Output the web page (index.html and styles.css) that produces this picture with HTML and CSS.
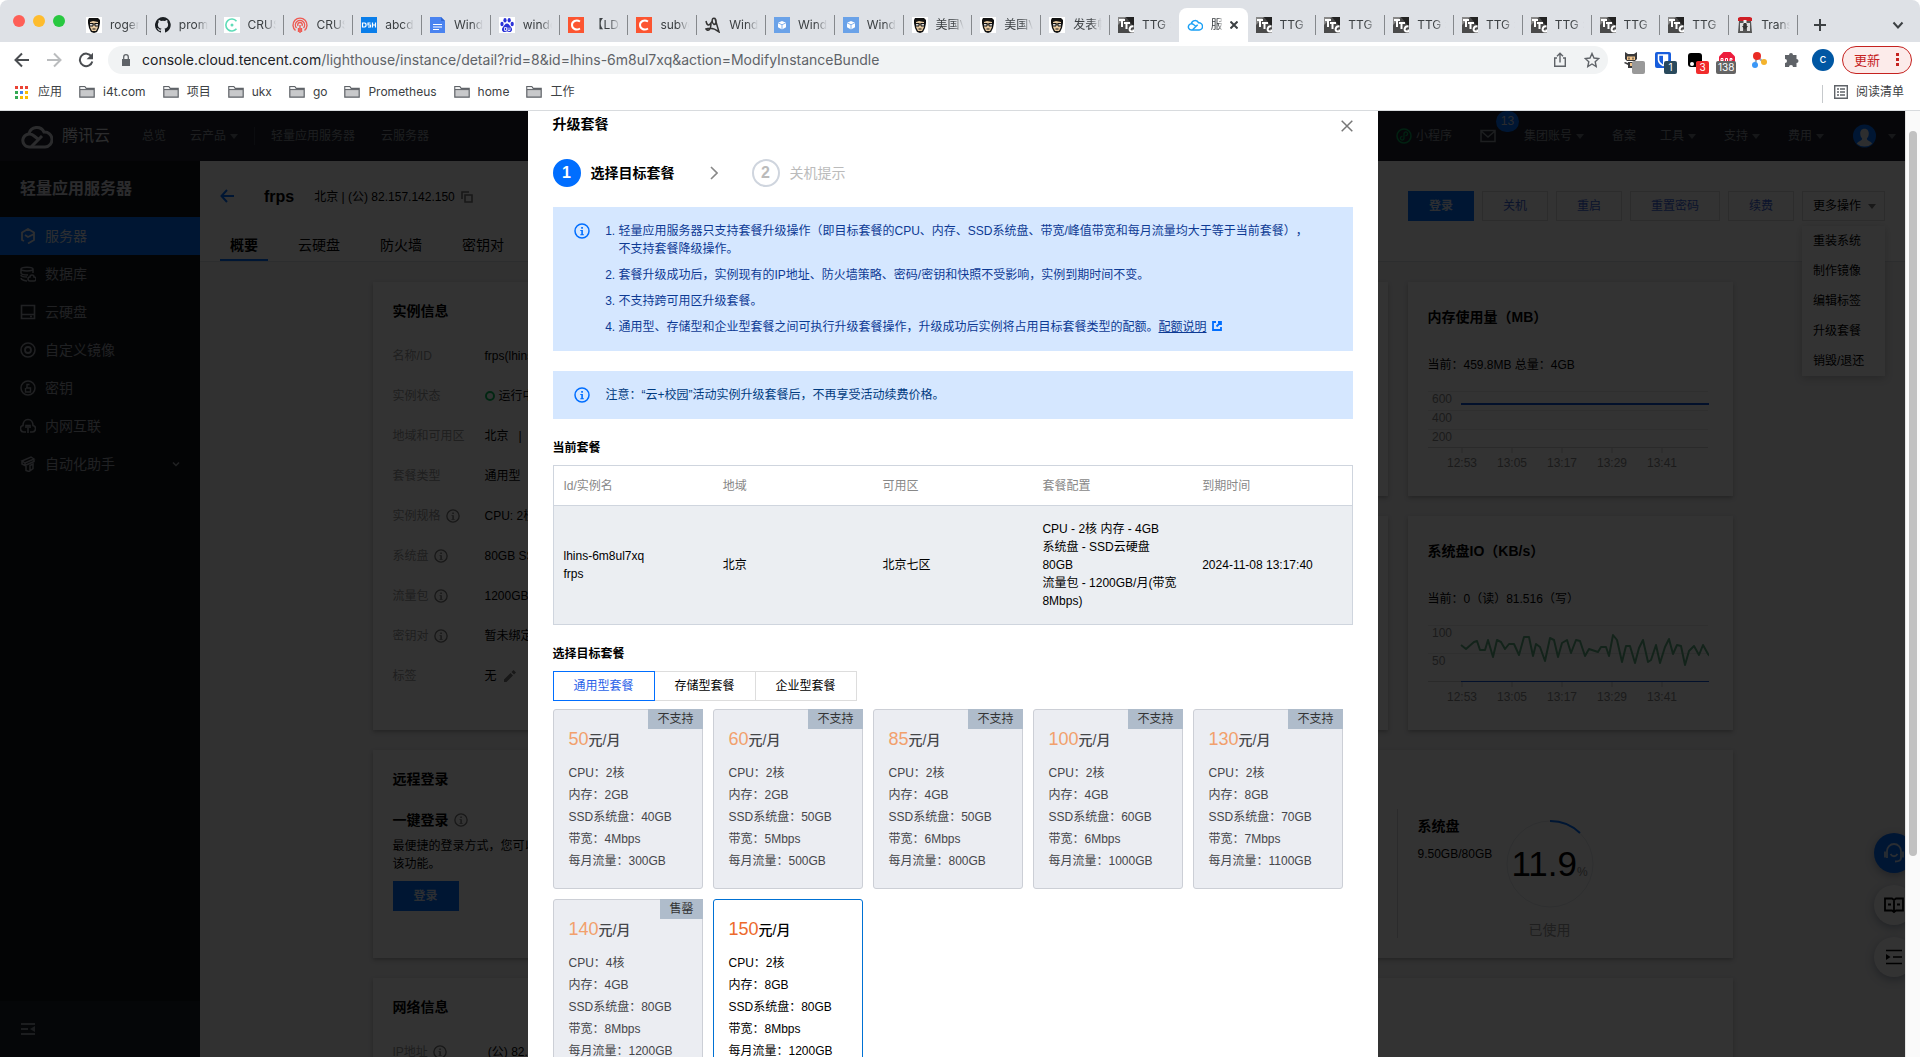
FILE: index.html
```html
<!DOCTYPE html>
<html lang="zh-CN">
<head>
<meta charset="utf-8">
<title>升级套餐 - 轻量应用服务器 - 控制台</title>
<link rel="stylesheet" href="styles.css">
</head>
<body>
<svg class="sprite" aria-hidden="true">
  <symbol id="info" viewBox="0 0 16 16"><circle cx="8" cy="8" r="7" fill="none" stroke="currentColor" stroke-width="1.5"/><path d="M7.2 4h1.7v1.7H7.2zM6.3 7h2.6v4.3h1v1H6.3v-1h1V8h-1z" fill="currentColor"/></symbol>
  <symbol id="folder" viewBox="0 0 16 16"><path d="M.8 13.2V2.6h5l1.4 1.8h8v8.8z" fill="#c8c9cb" stroke="#5f6368" stroke-width="1.2"/><path d="M1.4 3.2h4.1l1.2 1.6H1.4z" fill="#fff"/><path d="M1 5.6h14" stroke="#5f6368"/></symbol>
  <symbol id="face" viewBox="0 0 16 16"><path fill="#fff" d="M0 0h16v16H0z"/><path fill="#111" d="M3 1h9l2 2v3l-1 5-2 4-3 1-3-1-2-4-1-5V3z"/><path fill="#e6c9a0" d="M4 5l3-1 5 1v5l-2 4H6l-2-4z"/><path fill="#d8d8d8" d="M4 6.500h3v2.500H4zM9 6.500h3v2.500H9z"/><path fill="none" stroke="#111" d="M3.500 6.500h3.500v2.500H3.500zM9 6.500h3.500v2.500H9zM7 7h2M6.500 12h3"/></symbol>
  <symbol id="ttg" viewBox="0 0 16 16"><path fill="#4a4a4a" d="M0 0h16v16H0z"/><path fill="#888" d="M0 0h8L0 8z"/><path fill="#222" d="M16 0v10L8 0z"/><path fill="none" stroke="#fff" stroke-width="2" d="M1 3h6M4 3v7M6 6h6M8.500 6v6M15.500 9.500c-4-1-5.500 5-1.500 5h1.500v-2"/></symbol>
  <symbol id="github" viewBox="0 0 16 16"><path fill="#1b1f23" d="M8 0a8 8 0 0 0-2.500 15.600c.4.100.500-.2.500-.4v-1.500c-2.200.5-2.700-1-2.700-1-.4-1-.9-1.200-.9-1.200-.7-.5.1-.5.100-.5.8.1 1.200.8 1.200.8.700 1.200 1.900.9 2.300.7.100-.5.300-.9.500-1.100-1.800-.2-3.600-.9-3.600-4 0-.9.300-1.600.8-2.100-.1-.3-.4-1.100.1-2.200 0 0 .7-.2 2.200.8a7.600 7.600 0 0 1 4 0c1.500-1 2.200-.8 2.200-.8.400 1.100.200 1.900.100 2.200.5.500.8 1.200.8 2.100 0 3.100-1.900 3.800-3.700 4 .3.200.600.700.600 1.500v2.200c0 .2.100.5.500.4A8 8 0 0 0 8 0"/></symbol>
  <symbol id="crisp" viewBox="0 0 16 16"><path fill="#fff" d="M0 0h16v16H0z"/><path d="M12.500 4.200A6 6 0 1 0 12.500 11.800" fill="none" stroke="#5fdcb8" stroke-width="1.600"/><circle cx="8" cy="8" r="1.500" fill="#5fdcb8"/></symbol>
  <symbol id="podcast" viewBox="0 0 16 16"><g fill="none" stroke="#ee5a52" stroke-width="1.400"><path d="M3.500 13.500a7 7 0 1 1 9 0M4.500 11a4.600 4.600 0 1 1 7 0M6 9a2.300 2.300 0 1 1 4 0"/><path d="M8 8v8M6.500 11v4M9.500 11v4"/></g></symbol>
  <symbol id="dsm" viewBox="0 0 16 16"><path fill="#0a7eea" d="M0 0h16v16H0z"/><path fill="none" stroke="#fff" stroke-width="1.200" d="M1.500 6H4l1 1v2L4 10H1.500zM9.500 6H7v2h2.500v2H7M11.500 5.500v5M14.500 5.500v5M11.500 8h3"/></symbol>
  <symbol id="doc" viewBox="0 0 16 16"><path fill="#4a83f0" d="M0 0h11l4 4v12H0z"/><path fill="#2f66d4" d="M11 0l4 4h-4z"/><path stroke="#fff" stroke-width="1.200" d="M3 7.500h9M3 10h9M3 12.500h6"/></symbol>
  <symbol id="paw" viewBox="0 0 16 16"><path fill="#fff" d="M0 0h16v16H0z"/><g fill="#2b32d8"><ellipse cx="3" cy="7" rx="1.600" ry="2.200"/><ellipse cx="6" cy="3.200" rx="1.600" ry="2.300"/><ellipse cx="10.200" cy="3.200" rx="1.600" ry="2.300"/><ellipse cx="13.200" cy="7" rx="1.600" ry="2.200"/><path d="M8 6.500c2 0 2.500 2 4 3.500 2 2 1 5-1.500 5-1 0-1.500-.5-2.500-.5s-1.500.5-2.500.5C3 15 2 12 4 10c1.500-1.500 2-3.500 4-3.500"/></g><path d="M5.500 10.500h2v3h-2zM9 10.500v3h2v-3" fill="none" stroke="#fff" stroke-width=".8"/></symbol>
  <symbol id="csdn" viewBox="0 0 16 16"><path fill="#fc5531" d="M0 0h16v16H0z"/><path fill="none" stroke="#fff" stroke-width="2" d="M12 4.500C8 2 4 4.500 4 8s4 6 8 3.500"/></symbol>
  <symbol id="script" viewBox="0 0 16 16"><path fill="none" stroke="#333" stroke-width="1.500" d="M1 4c1 5 3 5 5 2 0 7-3 9-5 6 3-1 8-1 13 3L10 1.500C7 0 6 5 9 7.500c2 0 3-4 1-6"/></symbol>
  <symbol id="cube" viewBox="0 0 16 16"><path fill="#6aa2e8" d="M0 0h16v16H0z"/><path fill="#fff" d="M8 4l4 1.800v4.400L8 12.500l-4-2.300V5.800z"/><path fill="none" stroke="#6aa2e8" stroke-width=".8" d="M4 5.800l4 2 4-2M8 7.800v5"/></symbol>
  <symbol id="trans" viewBox="0 0 16 16"><path fill="#555" d="M2 4h12l1 12H1z"/><path fill="#cf1f25" d="M1 1l2-1h10l2 1v3H1z"/><path fill="#ddd" d="M3 6h3v8H3zM10 6h3v8h-3z"/><path fill="#eee" d="M6.500 3h3v4h-3z"/><path fill="#333" d="M7 6h2v3h2l-3 4-3-4h2z"/></symbol>
  <symbol id="tcloud" viewBox="0 0 33 25"><g fill="none" stroke="currentColor" stroke-width="3"><path d="M9 9.500A8 8 0 0 1 24 8a7.500 7.500 0 0 1 1 15H9a6.500 6.500 0 1 1 4.500-11.500L18 15"/><path d="M11.500 22.500L22 12"/></g></symbol>
  <symbol id="caret" viewBox="0 0 8 5"><path fill="currentColor" d="M0 0h8L4 5z"/></symbol>
</svg>

<header class="browser">
  <div class="tabstrip">
    <div class="lights"><i class="light light-red"></i><i class="light light-amber"></i><i class="light light-green"></i></div>
    <div class="tabs">
      <div class="tab"><svg class="fav"><use href="#face"/></svg><span class="tab-text">roger</span></div>
      <div class="tab"><svg class="fav"><use href="#github"/></svg><span class="tab-text">prom</span></div>
      <div class="tab"><svg class="fav"><use href="#crisp"/></svg><span class="tab-text">CRUS</span></div>
      <div class="tab"><svg class="fav"><use href="#podcast"/></svg><span class="tab-text">CRUS</span></div>
      <div class="tab"><svg class="fav"><use href="#dsm"/></svg><span class="tab-text">abcd</span></div>
      <div class="tab"><svg class="fav"><use href="#doc"/></svg><span class="tab-text">Wind</span></div>
      <div class="tab"><svg class="fav"><use href="#paw"/></svg><span class="tab-text">windo</span></div>
      <div class="tab"><svg class="fav"><use href="#csdn"/></svg><span class="tab-text">【LDA</span></div>
      <div class="tab"><svg class="fav"><use href="#csdn"/></svg><span class="tab-text">subve</span></div>
      <div class="tab"><svg class="fav"><use href="#script"/></svg><span class="tab-text">Wind</span></div>
      <div class="tab"><svg class="fav"><use href="#cube"/></svg><span class="tab-text">Wind</span></div>
      <div class="tab"><svg class="fav"><use href="#cube"/></svg><span class="tab-text">Wind</span></div>
      <div class="tab"><svg class="fav"><use href="#face"/></svg><span class="tab-text">美国V</span></div>
      <div class="tab"><svg class="fav"><use href="#face"/></svg><span class="tab-text">美国V</span></div>
      <div class="tab"><svg class="fav"><use href="#face"/></svg><span class="tab-text">发表帖</span></div>
      <div class="tab tab-before"><svg class="fav"><use href="#ttg"/></svg><span class="tab-text">TTG :</span></div>
      <div class="tab tab-active"><svg class="fav cloud-fav"><use href="#tcloud"/></svg><span class="tab-text">服</span><button class="tab-close" aria-label="关闭标签页"><svg viewBox="0 0 8 8"><path d="M.5.5l7 7M7.500.5l-7 7"/></svg></button></div>
      <div class="tab"><svg class="fav"><use href="#ttg"/></svg><span class="tab-text">TTG :</span></div>
      <div class="tab"><svg class="fav"><use href="#ttg"/></svg><span class="tab-text">TTG :</span></div>
      <div class="tab"><svg class="fav"><use href="#ttg"/></svg><span class="tab-text">TTG :</span></div>
      <div class="tab"><svg class="fav"><use href="#ttg"/></svg><span class="tab-text">TTG :</span></div>
      <div class="tab"><svg class="fav"><use href="#ttg"/></svg><span class="tab-text">TTG :</span></div>
      <div class="tab"><svg class="fav"><use href="#ttg"/></svg><span class="tab-text">TTG :</span></div>
      <div class="tab"><svg class="fav"><use href="#ttg"/></svg><span class="tab-text">TTG :</span></div>
      <div class="tab"><svg class="fav"><use href="#trans"/></svg><span class="tab-text">Trans</span></div>
    </div>
    <div class="strip-end">
      <button class="bare" aria-label="新标签页"><svg class="i12" viewBox="0 0 12 12"><path d="M6 0v12M0 6h12" stroke="#3c4043" stroke-width="2"/></svg></button>
      <button class="bare" aria-label="搜索标签页"><svg class="i12" viewBox="0 0 12 12"><path d="M1.500 3.500L6 8.500l4.500-5" fill="none" stroke="#3c4043" stroke-width="2"/></svg></button>
    </div>
  </div>
  <div class="toolbar">
    <nav class="history">
      <button class="bare" aria-label="后退"><svg class="i16" viewBox="0 0 16 16"><path d="M15 8H2M8 1.500L1.500 8 8 14.500" fill="none" stroke="#4a4d51" stroke-width="2"/></svg></button>
      <button class="bare" aria-label="前进"><svg class="i16" viewBox="0 0 16 16"><path d="M1 8h13M8 1.500L14.500 8 8 14.500" fill="none" stroke="#babcbe" stroke-width="2"/></svg></button>
      <button class="bare" aria-label="重新加载"><svg class="i16" viewBox="0 0 16 16"><path d="M13.500 4.500A6.300 6.300 0 1 0 14.300 9.500" fill="none" stroke="#4a4d51" stroke-width="2"/><path d="M15 .8v6.400H8.600z" fill="#4a4d51"/></svg></button>
    </nav>
    <div class="address">
      <svg class="lock" viewBox="0 0 10 12"><path d="M1 5h8v7H1z" fill="#5f6368"/><path d="M2.700 5V3a2.300 2.300 0 0 1 4.600 0v2" fill="none" stroke="#5f6368" stroke-width="1.300"/></svg>
      <div class="url" role="textbox" aria-label="地址"><b>console.cloud.tencent.com</b>/lighthouse/instance/detail?rid=8&amp;id=lhins-6m8ul7xq&amp;action=ModifyInstanceBundle</div>
      <button class="bare" aria-label="分享"><svg class="i16" viewBox="0 0 16 16"><path d="M5 6H2.700v8.300h10.600V6H11M8 10.500V1.500M5 4.300l3-3 3 3" fill="none" stroke="#5f6368" stroke-width="1.400"/></svg></button>
      <button class="bare" aria-label="收藏"><svg class="i16" viewBox="0 0 16 16"><path d="M8 1.500l2 4.500 4.800.5-3.600 3.200 1 4.800L8 12l-4.200 2.500 1-4.800L1.200 6.500 6 6z" fill="none" stroke="#5f6368" stroke-width="1.400"/></svg></button>
    </div>
    <div class="extensions">
      <span class="ext"><svg class="i16" viewBox="0 0 16 16"><path fill="#3a3a3c" d="M2 0l3 2h6l3-2v7l-2 2H4L2 7zM5 10h6v6H5v-3l-4-2 1-1 3 1z"/><path fill="#f2c48a" d="M4 4.500h8v3.500H4zM7 11h3v3H7z"/><path d="M6 5.500v2M10 5.500v2" stroke="#222"/></svg><i class="count count-gray"></i></span>
      <span class="ext"><svg class="i16" viewBox="0 0 16 16"><path fill="#175ddc" d="M0 2a2 2 0 0 1 2-2h12a2 2 0 0 1 2 2v14H2a2 2 0 0 1-2-2z"/><path fill="none" stroke="#fff" stroke-width="1.500" d="M3.500 3h9v5c0 3-3 4.500-4.500 5.500C6.500 12.500 3.500 11 3.500 8z"/><path fill="#fff" d="M8 3h4v6l-4 4z"/></svg><i class="count count-navy">1</i></span>
      <span class="ext"><svg class="i16" viewBox="0 0 16 16"><path fill="#000" d="M1 4a3 3 0 0 1 3-3h8a3 3 0 0 1 3 3v11H4a3 3 0 0 1-3-3z"/><circle cx="5" cy="12" r="2" fill="#fff"/><circle cx="11" cy="12" r="2" fill="#fff"/></svg><i class="count count-red">3</i></span>
      <span class="ext"><svg class="i16" viewBox="0 0 16 16"><path fill="#ed1c3c" d="M4.500 0h7L16 4.500v7L11.500 16h-7L0 11.500v-7z"/><path d="M2 10V6.500h2V10M2 8.500h2M6.500 6.500v4h2v-4zM11 10V6.500h2V8h-2" fill="none" stroke="#fff"/></svg><i class="count count-wide">138</i></span>
      <span class="ext"><svg class="i16" viewBox="0 0 16 16"><path d="M6 4l6 6M6 4l-2 9" stroke="#9ab" stroke-width="2"/><circle cx="6" cy="4" r="4" fill="#ea2b24"/><circle cx="4" cy="13" r="3" fill="#3a97f7"/><circle cx="13" cy="10" r="3" fill="#f4b32c"/></svg></span>
      <span class="ext"><svg class="i16" viewBox="0 0 16 16"><path fill="#5f6368" d="M6 3a2 2 0 0 1 4 0h3.500v4a2 2 0 0 1 0 4v4H10a2 2 0 0 0-4 0H2v-4a2 2 0 0 0 0-4V3z"/></svg></span>
      <span class="profile">c</span>
      <button class="update">更新<svg viewBox="0 0 4 14"><path fill="#c5221f" d="M0 0h3v3H0zM0 5h3v3H0zM0 10h3v3H0z"/></svg></button>
    </div>
  </div>
  <nav class="bookmarks">
    <a class="bm bm-apps" href="#"><svg class="apps" viewBox="0 0 13 13"><path fill="#ea4335" d="M0 0h3v3H0zM5 0h3v3H5zM10 0h3v3h-3z"/><path fill="#34a853" d="M0 5h3v3H0zM0 10h3v3H0z"/><path fill="#4285f4" d="M5 5h3v3H5z"/><path fill="#fbbc04" d="M10 5h3v3h-3zM5 10h3v3H5zM10 10h3v3h-3z"/></svg>应用</a>
    <a class="bm" href="#"><svg class="i16"><use href="#folder"/></svg>i4t.com</a>
    <a class="bm" href="#"><svg class="i16"><use href="#folder"/></svg>项目</a>
    <a class="bm" href="#"><svg class="i16"><use href="#folder"/></svg>ukx</a>
    <a class="bm" href="#"><svg class="i16"><use href="#folder"/></svg>go</a>
    <a class="bm" href="#"><svg class="i16"><use href="#folder"/></svg>Prometheus</a>
    <a class="bm" href="#"><svg class="i16"><use href="#folder"/></svg>home</a>
    <a class="bm" href="#"><svg class="i16"><use href="#folder"/></svg>工作</a>
    <a class="bm reading" href="#"><svg class="i14" viewBox="0 0 14 14"><path d="M.7.7h12.600v12.600H.7z" fill="none" stroke="#5f6368" stroke-width="1.400"/><path d="M3 4h2M3 7h2M3 10h2M6 4h5M6 7h5M6 10h5" stroke="#5f6368" stroke-width="1.400"/></svg>阅读清单</a>
  </nav>
</header>

<div class="view">
  <div class="app">
    <header class="topnav">
      <a class="logo" href="#"><svg viewBox="0 0 33 25"><use href="#tcloud"/></svg>腾讯云</a>
      <a class="nav-home" href="#">总览</a>
      <a class="nav-products" href="#">云产品<svg class="caret"><use href="#caret"/></svg></a>
      <a class="nav-pinned" href="#">轻量应用服务器</a>
      <a class="nav-cvm" href="#">云服务器</a>
      <nav class="nav-right">
        <a href="#"><svg class="i16 green" viewBox="0 0 16 16"><circle cx="8" cy="8" r="7" fill="none" stroke="currentColor" stroke-width="1.500"/><path d="M6.500 8.500a1.800 1.800 0 1 0 1.500 1.800V5.700a1.800 1.800 0 1 1 1.500 1.800" fill="none" stroke="currentColor" stroke-width="1.300"/></svg>小程序</a>
        <a class="mail" href="#" aria-label="消息"><svg class="i16" viewBox="0 0 16 16"><path d="M1 2.500h14v11H1zM1 3l7 6 7-6" fill="none" stroke="currentColor" stroke-width="1.500"/></svg><span class="badge">13</span></a>
        <a href="#">集团账号<svg class="caret"><use href="#caret"/></svg></a>
        <a href="#">备案</a>
        <a href="#">工具<svg class="caret"><use href="#caret"/></svg></a>
        <a href="#">支持<svg class="caret"><use href="#caret"/></svg></a>
        <a href="#">费用<svg class="caret"><use href="#caret"/></svg></a>
        <a class="user" href="#" aria-label="账号"><svg class="avatar" viewBox="0 0 24 24"><circle cx="12" cy="12" r="12" fill="#006eff"/><path fill="#dfe3ea" d="M12 4.500c6 0 5 8 2.500 10 0 3 4 2 5.500 5.500a12 12 0 0 1-16 0c1.500-3.500 5.500-2.500 5.500-5.500C7 12.500 6 4.500 12 4.500"/></svg><svg class="caret"><use href="#caret"/></svg></a>
      </nav>
    </header>
    <div class="app-body">
      <aside class="sidebar">
        <h2 class="side-title">轻量应用服务器</h2>
        <a class="side-item side-active" href="#"><svg class="i16" viewBox="0 0 16 16"><path d="M2 10V4.500L8 1l6 3.500V8M2 6v6l2 1M14 7v5l-6 3.500M5 7l3 2 6-3" fill="none" stroke="currentColor" stroke-width="1.800"/></svg>服务器</a>
        <a class="side-item" href="#"><svg class="i16" viewBox="0 0 16 16"><path d="M1 3c0-2.500 12-2.500 12 0S1 5.500 1 3v4c0 2 7 2 7 2M13 3v4M1 9c0 2 6 2 6 2M1 12c0 2 5 3 6 3M10 15a2 2 0 0 1 0-4 2 2 0 0 1 4 0 2 2 0 0 1 0 4z" fill="none" stroke="currentColor" stroke-width="1.500"/></svg>数据库</a>
        <a class="side-item" href="#"><svg class="i16" viewBox="0 0 16 16"><path d="M1.500 1.500h13v13h-13zM1.500 10.500h13M10 12.500h2" fill="none" stroke="currentColor" stroke-width="1.600"/></svg>云硬盘</a>
        <a class="side-item" href="#"><svg class="i16" viewBox="0 0 16 16"><circle cx="8" cy="8" r="7" fill="none" stroke="currentColor" stroke-width="1.500"/><circle cx="8" cy="8" r="3" fill="none" stroke="currentColor" stroke-width="1.800"/></svg>自定义镜像</a>
        <a class="side-item" href="#"><svg class="i16" viewBox="0 0 16 16"><circle cx="8" cy="8" r="7" fill="none" stroke="currentColor" stroke-width="1.500"/><path d="M6 8h4.500v4H5.500V8M7 8V4.500h2.500" fill="none" stroke="currentColor" stroke-width="1.400"/></svg>密钥</a>
        <a class="side-item" href="#"><svg class="i16" viewBox="0 0 16 16"><path d="M6 14H4a3.300 3.300 0 0 1-1-6.500C3 4 5 1.500 8 1.500s5 2.500 5 6A3.300 3.300 0 0 1 12 14h-2M8 15V8M6 10V7.500h4V10" fill="none" stroke="currentColor" stroke-width="1.600"/></svg>内网互联</a>
        <a class="side-item" href="#"><svg class="i16" viewBox="0 0 16 16"><path d="M2 5l9-4 3 2-9 4zM2 5v3l3 1.500V7M5 9.500L14 5.500V3M6 10v4.500l3 1 4-3V8l-3 1.500V15" fill="none" stroke="currentColor" stroke-width="1.500"/></svg>自动化助手<svg class="side-chev" viewBox="0 0 8 8"><path d="M1 2.500l3 3 3-3" fill="none" stroke="currentColor" stroke-width="1.500"/></svg></a>
        <div class="side-foot"><svg class="i14" viewBox="0 0 14 12"><path d="M0 1h14M0 6h7M0 11h14" stroke="currentColor" stroke-width="2"/><path d="M14 3v6L9 6z" fill="currentColor"/></svg></div>
      </aside>
      <main class="main">
        <div class="page-head">
          <div class="head-row">
            <a class="back" href="#" aria-label="返回"><svg class="i14" viewBox="0 0 14 14"><path d="M14 7H1.500M7 1L1.500 7 7 13" fill="none" stroke="currentColor" stroke-width="2"/></svg></a>
            <h1 class="inst-name">frps</h1>
            <span class="inst-ip">北京 | (公) 82.157.142.150</span>
            <svg class="copy" viewBox="0 0 12 12"><path d="M1 8V1h7M4 4h7v7H4z" fill="none" stroke="currentColor" stroke-width="1.600"/></svg>
            <div class="actions">
              <button class="btn btn-primary">登录</button>
              <button class="btn">关机</button>
              <button class="btn">重启</button>
              <button class="btn">重置密码</button>
              <button class="btn">续费</button>
              <div class="more">
                <button class="btn btn-more">更多操作<svg class="caret"><use href="#caret"/></svg></button>
                <ul class="menu"><li>重装系统</li><li>制作镜像</li><li>编辑标签</li><li>升级套餐</li><li>销毁/退还</li></ul>
              </div>
            </div>
          </div>
          <nav class="page-tabs"><a class="page-tab page-tab-on" href="#">概要</a><a class="page-tab" href="#">云硬盘</a><a class="page-tab" href="#">防火墙</a><a class="page-tab" href="#">密钥对</a></nav>
        </div>
        <div class="grid">
          <section class="card card-info">
            <h3 class="card-title">实例信息</h3>
            <dl class="facts">
              <div class="fact"><dt>名称/ID</dt><dd>frps(lhins</dd></div>
              <div class="fact"><dt>实例状态</dt><dd><i class="ring"></i>运行中</dd></div>
              <div class="fact"><dt>地域和可用区</dt><dd>北京 &nbsp; |</dd></div>
              <div class="fact"><dt>套餐类型</dt><dd>通用型</dd></div>
              <div class="fact"><dt>实例规格<svg class="i14"><use href="#info"/></svg></dt><dd>CPU: 2核</dd></div>
              <div class="fact"><dt>系统盘<svg class="i14"><use href="#info"/></svg></dt><dd>80GB SSD</dd></div>
              <div class="fact"><dt>流量包<svg class="i14"><use href="#info"/></svg></dt><dd>1200GB</dd></div>
              <div class="fact"><dt>密钥对<svg class="i14"><use href="#info"/></svg></dt><dd>暂未绑定</dd></div>
              <div class="fact"><dt>标签</dt><dd>无<svg class="pen" viewBox="0 0 12 12"><path d="M0 12V9.500l6.500-6.500L9 5.500 2.500 12zM7.500 2L9.500 0 12 2.500l-2 2z" fill="currentColor"/></svg></dd></div>
            </dl>
          </section>
          <section class="card" aria-hidden="true"></section>
          <section class="card card-chart">
            <h3 class="chart-title">内存使用量（MB）</h3>
            <p class="chart-now">当前：459.8MB 总量：4GB</p>
            <svg class="chart" viewBox="0 0 281 86">
              <path class="gridline" d="M0 4.500h280M0 23.500h280M0 42.500h280"/>
              <path class="axis" d="M0 60.500h280M34 61v5M84 61v5M134 61v5M184 61v5M234 61v5"/>
              <text x="4" y="16">600</text><text x="4" y="35">400</text><text x="4" y="54">200</text>
              <g text-anchor="middle"><text x="34" y="80">12:53</text><text x="84" y="80">13:05</text><text x="134" y="80">13:17</text><text x="184" y="80">13:29</text><text x="234" y="80">13:41</text></g>
              <path class="line-blue" d="M33 17h248"/>
            </svg>
          </section>
          <section class="card" aria-hidden="true"></section>
          <section class="card card-chart">
            <h3 class="chart-title">系统盘IO（KB/s）</h3>
            <p class="chart-now">当前：0（读）81.516（写）</p>
            <svg class="chart" viewBox="0 0 281 86">
              <path class="gridline" d="M0 4.500h280M0 32.500h280"/>
              <path class="axis" d="M0 60.500h280M34 61v5M84 61v5M134 61v5M184 61v5M234 61v5"/>
              <text x="4" y="16">100</text><text x="4" y="44">50</text>
              <g text-anchor="middle"><text x="34" y="80">12:53</text><text x="84" y="80">13:05</text><text x="134" y="80">13:17</text><text x="184" y="80">13:29</text><text x="234" y="80">13:41</text></g>
              <path class="line-blue line-thin" d="M33 60.500h248"/>
              <path class="line-green" d="M33 24l5 4 8-7 3-1 3 9h5l3-10 5 17 4-17 4 2 4 7 4-5h5l5 11 5-18h5l4 19 3-12 4 3 5 14 5-23 4 2 4 17 4-14 5-3 4 13 5-13 4 1 5 15 4-7 9 3 3-5h5l3 9 4-21 4 5 5 22 4-16h4l5 17 4-15 4-8 5 22 3-2 5-15 4 18 5-16 4-8 4 15 4-9 4 1 4 19 4-14 5-5 5 9 4-10 5 9 4 4 4-16"/>
            </svg>
          </section>
          <section class="card card-login">
            <div class="login">
              <h3 class="card-title">远程登录</h3>
              <h4 class="sub-title">一键登录<svg class="i14"><use href="#info"/></svg></h4>
              <p class="login-text">最便捷的登录方式，您可以<br>该功能。</p>
              <button class="btn btn-primary">登录</button>
            </div>
            <div class="disk">
              <div class="disk-info"><h4 class="disk-title">系统盘</h4><span>9.50GB/80GB</span></div>
              <div class="disk-gauge">
                <div class="gauge"><svg viewBox="0 0 88 88"><circle cx="44" cy="44" r="43" fill="none" stroke="#e5e8ed"/><path d="M44 1a43 43 0 0 1 30 12" fill="none" stroke="#006eff" stroke-width="2"/></svg><div class="gauge-value"><strong>11.9</strong><small>%</small></div></div>
                <span class="gauge-label">已使用</span>
              </div>
            </div>
          </section>
          <section class="card card-net">
            <h3 class="card-title">网络信息</h3>
            <dl class="facts"><div class="fact"><dt>IP地址<svg class="i14"><use href="#info"/></svg></dt><dd>&nbsp;(公) 82.</dd></div></dl>
          </section>
        </div>
      </main>
    </div>
    <div class="floats">
      <button class="float float-blue" aria-label="客服"><svg class="i20" viewBox="0 0 20 20"><path d="M1 8.500v6M19 8.500v6M3 15V8a7 7 0 0 1 14 0v7c0 2-1.500 3.500-6 3.500M6.500 11c2 3 5 3 7 0" fill="none" stroke="currentColor" stroke-width="1.800"/></svg></button>
      <button class="float" aria-label="文档"><svg class="i20" viewBox="0 0 20 20"><path d="M1 3.500h7l2 1.500 2-1.500h7v12h-7l-2 1.500-2-1.500H1zM10 5v12M4 9.500h3M13 9.500h3" fill="none" stroke="currentColor" stroke-width="1.800"/></svg></button>
      <button class="float" aria-label="展开"><svg class="i20" viewBox="0 0 20 20"><path d="M2 3.500h16M9 10h9M2 16.500h16" stroke="currentColor" stroke-width="1.600"/><path d="M2 7l4.500 3L2 13z" fill="currentColor"/></svg></button>
    </div>

    <div class="overlay">
      <div class="modal" role="dialog" aria-labelledby="dlg-title">
        <div class="modal-head"><h2 id="dlg-title" class="modal-title">升级套餐</h2><button class="bare" aria-label="关闭"><svg class="i12" viewBox="0 0 12 12"><path d="M.7.7l10.600 10.600M11.300.7L.7 11.300" stroke="#777" stroke-width="1.500"/></svg></button></div>
        <ol class="steps">
          <li class="step step-on"><span class="step-no">1</span>选择目标套餐</li>
          <li class="step-sep"><svg viewBox="0 0 8 14"><path d="M1 1l6 6-6 6" fill="none" stroke="#888" stroke-width="1.600"/></svg></li>
          <li class="step"><span class="step-no">2</span>关机提示</li>
        </ol>
        <div class="alert">
          <svg class="i16 alert-icon"><use href="#info"/></svg>
          <ol class="alert-list">
            <li>轻量应用服务器只支持套餐升级操作（即目标套餐的CPU、内存、SSD系统盘、带宽/峰值带宽和每月流量均大于等于当前套餐），不支持套餐降级操作。</li>
            <li>套餐升级成功后，实例现有的IP地址、防火墙策略、密码/密钥和快照不受影响，实例到期时间不变。</li>
            <li>不支持跨可用区升级套餐。</li>
            <li>通用型、存储型和企业型套餐之间可执行升级套餐操作，升级成功后实例将占用目标套餐类型的配额。<a class="quota" href="#">配额说明</a> <svg class="jump" viewBox="0 0 10 10"><path d="M4 1H1v8h8V6M6 1h3v3M9 1L4.500 5.500" fill="none" stroke="#006eff" stroke-width="1.800"/></svg></li>
          </ol>
        </div>
        <div class="alert"><svg class="i16 alert-icon"><use href="#info"/></svg><p>注意：“云+校园”活动实例升级套餐后，不再享受活动续费价格。</p></div>
        <h3 class="block-title">当前套餐</h3>
        <table class="plan-table">
          <thead><tr><th>Id/实例名</th><th>地域</th><th>可用区</th><th>套餐配置</th><th>到期时间</th></tr></thead>
          <tbody><tr><td>lhins-6m8ul7xq<br>frps</td><td>北京</td><td>北京七区</td><td>CPU - 2核 内存 - 4GB<br>系统盘 - SSD云硬盘<br>80GB<br>流量包 - 1200GB/月(带宽<br>8Mbps)</td><td>2024-11-08 13:17:40</td></tr></tbody>
        </table>
        <h3 class="block-title">选择目标套餐</h3>
        <div class="seg"><button class="seg-btn seg-on">通用型套餐</button><button class="seg-btn">存储型套餐</button><button class="seg-btn">企业型套餐</button></div>
        <div class="plans">
          <button class="plan" disabled><span class="tag">不支持</span><span class="price"><b>50</b>元/月</span><span>CPU：2核</span><span>内存：2GB</span><span>SSD系统盘：40GB</span><span>带宽：4Mbps</span><span>每月流量：300GB</span></button>
          <button class="plan" disabled><span class="tag">不支持</span><span class="price"><b>60</b>元/月</span><span>CPU：2核</span><span>内存：2GB</span><span>SSD系统盘：50GB</span><span>带宽：5Mbps</span><span>每月流量：500GB</span></button>
          <button class="plan" disabled><span class="tag">不支持</span><span class="price"><b>85</b>元/月</span><span>CPU：2核</span><span>内存：4GB</span><span>SSD系统盘：50GB</span><span>带宽：6Mbps</span><span>每月流量：800GB</span></button>
          <button class="plan" disabled><span class="tag">不支持</span><span class="price"><b>100</b>元/月</span><span>CPU：2核</span><span>内存：4GB</span><span>SSD系统盘：60GB</span><span>带宽：6Mbps</span><span>每月流量：1000GB</span></button>
          <button class="plan" disabled><span class="tag">不支持</span><span class="price"><b>130</b>元/月</span><span>CPU：2核</span><span>内存：8GB</span><span>SSD系统盘：70GB</span><span>带宽：7Mbps</span><span>每月流量：1100GB</span></button>
          <button class="plan" disabled><span class="tag">售罄</span><span class="price"><b>140</b>元/月</span><span>CPU：4核</span><span>内存：4GB</span><span>SSD系统盘：80GB</span><span>带宽：8Mbps</span><span>每月流量：1200GB</span></button>
          <button class="plan plan-on"><span class="price"><b>150</b>元/月</span><span>CPU：2核</span><span>内存：8GB</span><span>SSD系统盘：80GB</span><span>带宽：8Mbps</span><span>每月流量：1200GB</span></button>
        </div>
      </div>
    </div>
  </div>
  <div class="scrollbar"><div class="thumb"></div></div>
</div>
</body>
</html>
```
FILE: styles.css
```css
* { box-sizing: border-box; }
body {
  margin: 0;
  height: 100vh;
  display: flex;
  flex-direction: column;
  overflow: hidden;
  background: #fff;
  color: #000;
  font: 12px/18px "Liberation Sans", "Noto Sans CJK SC", sans-serif;
  text-spacing-trim: space-all;
}
h1, h2, h3, h4, p, ol, ul, dl, dd { margin: 0; padding: 0; }
ol, ul { list-style: none; }
a { color: inherit; text-decoration: none; }
button { font: inherit; color: inherit; }
i { font-style: normal; }
svg { flex: none; display: block; }
.sprite { position: absolute; width: 0; height: 0; }
.bare { border: 0; padding: 0; background: none; display: flex; }
.i12 { width: 12px; height: 12px; }
.i14 { width: 14px; height: 14px; }
.i16 { width: 16px; height: 16px; }
.i20 { width: 20px; height: 20px; }

/* Browser chrome */
.browser { flex: none; border-bottom: 1px solid #d8dbde; font-family: Inter, "Noto Sans CJK SC", sans-serif; color: #3c4043; }
.tabstrip { display: flex; height: 42px; background: #dee1e6; border-radius: 8px 8px 0 0; }
.lights { width: 78px; flex: none; display: flex; gap: 8px; padding: 15px 0 0 13px; }
.light { width: 12px; height: 12px; border-radius: 50%; }
.light-red { background: #fe5f57; }
.light-amber { background: #febc2e; }
.light-green { background: #28c840; }
.tabs { flex: 1; display: flex; padding-top: 8px; min-width: 0; }
.tab { flex: 1 1 0; min-width: 0; display: flex; align-items: center; gap: 8px; padding: 0 8px; position: relative; }
.tab::after { content: ""; position: absolute; right: 0; top: 7px; width: 1px; height: 20px; background: #85888c; }
.tab-before::after, .tab-active::after { display: none; }
.fav { width: 16px; height: 16px; }
.cloud-fav { color: #1aa0f5; }
.tab-text { flex: 1; overflow: hidden; white-space: nowrap; mask-image: linear-gradient(90deg, #000 60%, transparent); }
.tab-active { background: #fff; border-radius: 8px 8px 0 0; }
.tab-close { border: 0; background: none; padding: 0; margin-left: -3px; width: 12px; display: flex; justify-content: center; }
.tab-close svg { width: 8px; height: 8px; fill: none; stroke: #3c4043; stroke-width: 2; }
.strip-end { width: 122px; flex: none; display: flex; justify-content: space-between; align-items: center; padding: 20px 16px 12px; }
.toolbar { display: flex; align-items: center; height: 36px; padding: 0 8px 0 14px; }
.history { display: flex; gap: 16px; margin-right: 14px; }
.address { flex: 1; display: flex; align-items: center; gap: 16px; height: 28px; margin-right: 15px; padding: 0 8px 0 13px; border-radius: 14px; background: #f1f3f4; }
.lock { width: 10px; height: 12px; }
.url { flex: 1; margin-left: -5px; font-size: 14px; line-height: 20px; color: #5f6368; white-space: nowrap; }
.url b { font-weight: 400; color: #202124; }
.extensions { display: flex; align-items: center; gap: 16px; }
.ext { position: relative; }
.count { position: absolute; left: 9px; top: 9px; min-width: 13px; height: 13px; padding: 0 3px; border-radius: 2px; color: #fff; font-size: 10px; line-height: 13px; text-align: center; }
.count-gray { background: #999; }
.count-navy { background: #29495c; }
.count-red { background: #f12c2c; }
.count-wide { left: -3px; background: #646464; padding: 0 2px; }
.profile { width: 22px; height: 22px; margin: 0 -3px; border-radius: 50%; background: #0057a3; color: #fff; line-height: 20px; text-align: center; }
.update { display: flex; align-items: center; gap: 16px; margin-left: -5px; height: 28px; padding: 0 11px; border: 1px solid #c5221f; border-radius: 14px; background: #fcebea; color: #c5221f; font-size: 13px; }
.update svg { width: 4px; height: 14px; }
.bookmarks { display: flex; gap: 17px; height: 32px; padding: 0 16px 4px 15px; color: #3c4043; }
.bm { display: flex; align-items: center; gap: 8px; }
.bm-apps { gap: 10px; }
.apps { width: 13px; height: 13px; }
.reading { margin-left: auto; padding-left: 12px; background: linear-gradient(#c6c9cc, #c6c9cc) 0 7px / 1px 18px no-repeat; }

/* Console */
.view { flex: 1; min-height: 0; display: flex; overflow: hidden; }
.app { flex: 1; min-width: 0; position: relative; overflow: hidden; display: flex; flex-direction: column; }
.scrollbar { width: 15px; flex: none; background: #fafafa; border-left: 1px solid #e4e4e4; padding: 20px 3px; }
.thumb { height: 80%; border-radius: 4px; background: #c1c1c1; }
.caret { width: 8px; height: 5px; }
.topnav { flex: none; height: 50px; display: flex; align-items: center; padding: 0 5px 0 20px; background: #1e222d; color: #8f969f; }
.topnav a { display: flex; align-items: center; }
.topnav a.logo { gap: 9px; margin-right: 32px; font-size: 16px; color: #d5d8de; }
.logo svg { width: 33px; height: 25px; }
.nav-home { margin-right: 24px; }
.topnav .caret { margin: 0 4px; color: #6d737c; }
.nav-products { padding-right: 12px; border-right: 1px solid #3a3f4a; }
.nav-pinned { margin: 0 26px 0 16px; }
.nav-right { display: flex; align-items: center; margin-left: auto; gap: 24px; }
.nav-right .green { margin-right: 4px; color: #07a558; }
.mail { position: relative; margin: 0 4px 0 4px; }
.badge { position: absolute; left: 16px; top: -17px; width: 23px; height: 21px; border-radius: 11px; background: #006eff; color: #cfd6e2; line-height: 20px; text-align: center; }
.user { margin-left: 1px; }
.avatar { width: 23px; height: 24px; margin-right: 8px; }
.app-body { flex: 1; min-height: 0; display: flex; }
.sidebar { width: 200px; flex: none; display: flex; flex-direction: column; background: #13161c; color: #a0a4ad; font-size: 14px; }
.side-title { height: 56px; padding-left: 20px; line-height: 56px; font-size: 16px; color: #d5d8de; }
.side-item { display: flex; align-items: center; gap: 9px; height: 38px; padding: 0 20px; flex: none; }
.side-active { background: #006eff; color: #dfe6f2; }
.side-chev { width: 8px; height: 8px; margin-left: auto; }
.side-foot { margin-top: auto; height: 56px; padding: 21px; background: #1a202b; color: #8a8f99; }
.main { flex: 1; min-width: 0; background: #f2f2f3; }
.page-head { background: #fff; border-bottom: 1px solid #dcdfe5; padding: 30px 20px 0; }
.head-row { display: flex; align-items: flex-start; }
.back { color: #006eff; margin: -2px 30px 0 0; }
.inst-name { margin-right: 20px; font-size: 16px; line-height: 12px; }
.inst-ip { line-height: 12px; margin-right: 6px; }
.copy { width: 12px; height: 12px; color: #777; }
.actions { display: flex; gap: 8px; margin-left: auto; }
.btn { height: 30px; padding: 0 20px; border: 1px solid #ddd; background: none; color: #3a63d8; }
.btn-primary { border-color: #006eff; background: #006eff; color: #dbe7fa; font-weight: 700; }
.more { position: relative; }
.btn-more { display: flex; align-items: center; gap: 7px; padding: 0 8px 0 10px; color: #000; }
.btn-more .caret { color: #777; }
.menu { position: absolute; top: 35px; left: 0; right: 0; background: #fff; box-shadow: 0 2px 8px rgba(0,0,0,.2); z-index: 1; }
.menu li { height: 30px; padding-left: 11px; line-height: 30px; white-space: nowrap; }
.page-tabs { display: flex; gap: 20px; font-size: 14px; }
.page-tab { padding: 14px 10px 4px; line-height: 20px; border-bottom: 2px solid transparent; }
.page-tab-on { font-weight: 700; border-color: #006eff; }
.grid { display: grid; grid-template-columns: 1fr 325px 325px; grid-template-rows: 214px 214px; gap: 20px; max-width: 1360px; margin: 20px auto 0; }
.card { background: #fff; box-shadow: 0 2px 4px rgba(0,0,0,.25); }
.card-info { grid-row: span 2; padding: 18px 20px; }
.card-title { font-size: 14px; line-height: 22px; }
.facts { margin-top: 14px; }
.fact { display: flex; align-items: center; height: 40px; }
.fact dt { width: 92px; display: flex; align-items: center; gap: 5px; color: #999; }
.fact dt svg { color: #777; }
.fact dd { display: flex; align-items: center; }
.ring { width: 10px; height: 10px; margin-right: 4px; border: 2px solid #0abf5b; border-radius: 50%; }
.pen { width: 12px; height: 12px; margin-left: 7px; color: #777; }
.card-chart { padding: 24px 24px 0 20px; }
.chart-title { font-size: 14px; line-height: 22px; }
.chart-now { margin: 28px 0 13px; line-height: 18px; }
.chart { width: 100%; font-size: 12px; }
.chart text { fill: #888; }
.gridline { stroke: #eaeaea; }
.axis { stroke: #cfcfcf; stroke-width: 1; fill: none; }
.line-blue { stroke: #0a50d8; stroke-width: 2; }
.line-thin { stroke-width: 1; }
.line-green { fill: none; stroke: #5fae84; stroke-width: 2; stroke-linejoin: round; }
.card-login { grid-column: 1 / -1; height: 208px; padding: 18px 20px 20px; display: flex; justify-content: space-between; }
.sub-title { display: flex; align-items: center; gap: 5px; margin: 19px 0 6px; font-size: 14px; line-height: 22px; }
.sub-title svg { color: #777; }
.login-text { line-height: 18px; margin-bottom: 8px; }
.disk { display: flex; align-self: flex-end; width: 316px; height: 129px; border-left: 1px solid #d5d8dd; padding: 6px 0 0 20px; }
.disk-info { width: 88px; }
.disk-title { font-size: 14px; line-height: 22px; margin-bottom: 8px; }
.disk-gauge { display: flex; flex-direction: column; align-items: center; padding-top: 5px; }
.gauge { position: relative; width: 88px; height: 88px; }
.gauge-value { position: absolute; inset: 0; display: flex; align-items: baseline; justify-content: center; line-height: 88px; }
.gauge-value strong { font-size: 35px; font-weight: 400; }
.gauge-value small { font-size: 12px; color: #888; }
.gauge-label { margin-top: 12px; font-size: 14px; line-height: 20px; color: #999; }
.card-net { grid-column: 1 / -1; height: 208px; padding: 18px 20px; }
.floats { position: absolute; right: -9px; top: 722px; display: grid; gap: 12px; }
.float { width: 40px; height: 40px; padding: 0; border: 0; border-radius: 50%; display: grid; place-items: center; background: #fff; color: #000; box-shadow: 0 3px 8px rgba(30,50,90,.35); }
.float-blue { background: #006eff; color: #cfe0fa; }

/* Dialog */
.overlay { position: absolute; inset: 0; display: flex; justify-content: center; align-items: flex-start; background: rgba(0,0,0,.8); z-index: 2; }
.modal { width: 850px; min-height: 100%; padding: 0 25px 20px; background: #fff; }
.modal-head { display: flex; justify-content: space-between; align-items: flex-start; padding-top: 2px; }
.modal-head .bare { padding-top: 7px; }
.modal-title { font-size: 14px; line-height: 22px; }
.steps { display: flex; align-items: center; margin: 24px 0 20px; font-size: 14px; }
.step { display: flex; align-items: center; gap: 10px; color: #bbb; }
.step-on { color: #000; font-weight: 700; }
.step-no { width: 28px; height: 28px; border: 2px solid #cfd5de; border-radius: 50%; line-height: 24px; text-align: center; font-size: 16px; font-weight: 700; color: #bbb; }
.step-on .step-no { border-color: #006eff; background: #006eff; color: #fff; }
.step-sep { padding: 0 34px 0 35px; }
.step-sep svg { width: 8px; height: 14px; }
.alert { display: flex; gap: 16px; margin-bottom: 20px; padding: 15px 40px 15px 21px; background: #d5e7ff; color: #003b80; }
.alert-icon { margin-top: 1px; color: #006eff; }
.alert-list { list-style: decimal; padding-left: 13px; color: #0d3a94; }
.alert-list li + li { margin-top: 8px; }
.quota { text-decoration: underline; }
.jump { display: inline-block; width: 10px; height: 10px; margin-left: 2px; }
.block-title { font-size: 12px; line-height: 18px; margin-bottom: 8px; }
.plan-table { width: 100%; table-layout: fixed; border-collapse: collapse; border: 1px solid #cfd5de; margin-bottom: 20px; }
.plan-table th { height: 40px; padding: 0 10px; text-align: left; color: #888; font-weight: 400; }
.plan-table td { height: 119px; padding: 14px 10px; border-top: 1px solid #cfd5de; background: #ebeef2; }
.seg { display: flex; margin-bottom: 8px; }
.seg-btn { height: 30px; padding: 0 20px; border: 1px solid #ddd; background: #fff; color: #000; }
.seg-btn + .seg-btn { border-left: 0; }
.seg-on { border-color: #006eff; color: #2a62e8; }
.plans { display: flex; flex-wrap: wrap; gap: 10px; }
.plan { position: relative; width: 150px; height: 180px; display: flex; flex-direction: column; justify-content: flex-start; align-items: flex-start; padding: 16px 15px; border: 1px solid #cccfd6; border-radius: 3px; background: #ebedf2; color: #45464a; line-height: 22px; text-align: left; }
.price { font-size: 14px; line-height: 26px; margin-bottom: 9px; font-weight: 500; }
.price b { font-size: 18px; font-weight: 400; color: #f2a06c; }
.tag { position: absolute; top: -1px; right: -1px; height: 20px; padding: 0 9px; background: #afbccb; color: #333; line-height: 20px; }
.plan-on { background: #fff; border-color: #0071d4; color: #000; }
.plan-on .price b { color: #ed6a2c; }
```
